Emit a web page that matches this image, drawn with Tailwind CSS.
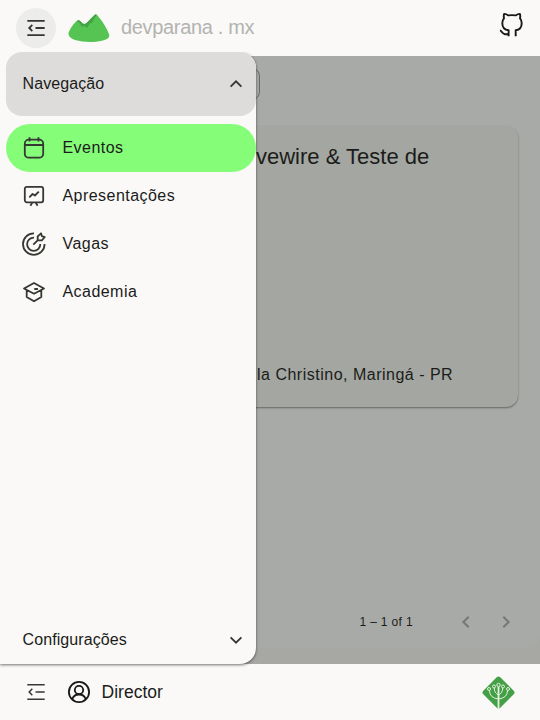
<!DOCTYPE html>
<html lang="pt-BR">
<head>
<meta charset="utf-8">
<title>devparana . mx</title>
<script src="https://cdn.jsdelivr.net/npm/@tailwindcss/browser@4"></script>
</head>
<body class="relative flex h-[720px] w-[540px] flex-col overflow-hidden bg-[#faf9f7] font-['Liberation_Sans',sans-serif] text-[#1b1c1a]">
<header class="flex h-14 shrink-0 items-center pl-4 pr-[15px]">
  <button class="flex size-10 items-center justify-center rounded-full bg-[#ecedeb]">
    <svg class="size-6" viewBox="0 0 24 24" fill="none" stroke="#353733" stroke-width="1.8"><path d="M3.3 4.8H20.7M11.5 12h9.2M3.3 19.2H20.7M8.3 8.8 5.2 12l3.1 3.2"/></svg>
  </button>
  <svg class="ml-3 h-8 w-[42px]" viewBox="0 0 42 32"><path d="M.8 20Q4 13 8.7 9Q11 7 13 9.8Q15 13 18 11.5L26.5 3Q28 1.5 29.5 3.5Q37 12 41 22Q43 28 30 29.5Q18 31.2 7 28Q-1 25 .8 20Z" fill="#55c453"/><path d="M8.7 9Q11 7 13 9.8Q15 13 18 11.5L26.5 3Q27.5 2 28.5 2.8L24 11L22 11.2L19 16L16.5 13.8L14 15L11.5 11Z" fill="#43a345"/></svg>
  <span class="mb-0.5 ml-[11px] whitespace-nowrap text-[20px] tracking-[-0.33px] text-[#b2b3b0]">devparana . mx</span>
  <svg class="ml-auto mb-[9px] h-7 w-[26px]" viewBox="-1 0 26 28" fill="none" stroke="#171916" stroke-width="1.9" stroke-linejoin="round"><path d="M8.6 26.3v-6C4.5 19.8 2.3 17 2.3 13.2c0-2.1.6-3.7 1.7-4.9-.4-1.5-.3-3 .1-4.4 1.6 0 3 .6 4.2 1.5 2.4-.4 5-.4 7.4 0 1.2-.9 2.6-1.5 4.2-1.5.4 1.4.5 2.9.1 4.4 1.1 1.2 1.7 2.8 1.7 4.9 0 3.8-2.2 6.6-6 7.1v6M0 20.3c1.6.4 2 3.6 5 4h3.6"/></svg>
</header>

<main class="flex h-[608px] shrink-0 flex-col bg-[#a7a7a4]">
  <section class="flex h-[592px] flex-col rounded-b-xl bg-[#a7aaa6] pl-3 pr-[22px] pt-3">
    <div class="h-8 w-[248px] rounded-lg border border-[#666964]"></div>
    <article class="mt-[26px] flex h-[281px] flex-col rounded-xl bg-[#a4a7a1] pl-[243px] shadow-[0_1px_2px_rgba(0,0,0,0.4)]">
      <h2 class="mt-[17px] whitespace-nowrap pl-px text-[22px] leading-7">vewire &amp; Teste de</h2>
      <p class="mt-[192px] whitespace-nowrap pl-[2px] text-base tracking-[0.5px]">la Christino, Maringá - PR</p>
    </article>
    <nav class="-mr-0.5 mb-[6px] mt-auto flex h-10 items-center justify-end">
      <span class="mr-[33px] text-xs tracking-[0.35px]">1 – 1 of 1</span>
      <span class="flex w-10 justify-center"><svg class="size-6" viewBox="0 0 24 24" fill="#747773"><path d="M15.4 7.4 14 6l-6 6 6 6 1.4-1.4-4.6-4.6z"/></svg></span>
      <span class="-mr-[6px] flex w-10 justify-center"><svg class="size-6" viewBox="0 0 24 24" fill="#747773"><path d="m10 6-1.4 1.4 4.6 4.6-4.6 4.6L10 18l6-6z"/></svg></span>
    </nav>
  </section>
</main>

<footer class="flex h-14 shrink-0 items-center pl-6 pr-6">
  <svg class="size-6" viewBox="0 0 24 24" fill="none" stroke="#353733" stroke-width="1.5"><path d="M3.3 4.8H20.7M11.5 12h9.2M3.3 19.2H20.7M8.3 8.8 5.2 12l3.1 3.2"/></svg>
  <svg class="ml-[19px] size-6" viewBox="0 0 24 24" fill="none" stroke="#171916" stroke-width="1.8"><circle cx="12" cy="12" r="10.1"/><circle cx="12" cy="10" r="4.2"/><path d="M5.3 19c1-3 3.7-4.5 6.7-4.5s5.7 1.5 6.7 4.5"/></svg>
  <span class="ml-[10.6px] text-[17.5px] leading-6">Director</span>
  <svg class="ml-auto size-[35px]" viewBox="0 0 35 35"><rect x="5.5" y="5.5" width="24" height="24" rx="2.5" transform="rotate(45 17.5 17.5)" fill="#43a047"/><g fill="none" stroke="#e5f1dc" stroke-width="1"><path d="M17.5 34V12" stroke-width="1.8"/><path d="M17.5 24q-9-1-9-8.5M17.5 24q9-1 9-8.5M17.5 20q-4.2-2-4.2-7M17.5 20q4.2-2 4.2-7"/><circle cx="8" cy="14" r="1.5"/><circle cx="13" cy="11.5" r="1.5"/><circle cx="17.5" cy="10" r="1.7"/><circle cx="22" cy="11.5" r="1.5"/><circle cx="27" cy="14" r="1.5"/></g></svg>
</footer>

<aside class="absolute left-0 top-[52px] flex h-[612px] w-64 flex-col rounded-r-2xl bg-[#faf9f7] shadow-[0_1px_3px_rgba(0,0,0,0.55)] [clip-path:inset(0_-5px_-6px_0)]">
  <div class="ml-1.5 flex h-16 items-center justify-between rounded-2xl bg-[#dddcda] pl-[16.5px] pr-2">
    <span class="text-base tracking-[0.1px]">Navegação</span>
    <svg class="size-6" viewBox="0 0 24 24" fill="none" stroke="#353733" stroke-width="1.8"><path d="m6.6 14.7 5.4-5.4 5.4 5.4"/></svg>
  </div>
  <nav class="ml-1.5 mt-2 flex flex-col text-base tracking-[0.45px]">
    <a class="flex h-12 items-center gap-[16.5px] rounded-full bg-[#86fd79] pl-4">
      <svg class="size-6" viewBox="0 0 24 24" fill="none" stroke="#353733" stroke-width="1.8"><rect x="2.8" y="3.7" width="18.4" height="18" rx="4"/><path d="M2.8 9h18.4M7.5 1.3v4.2M16.5 1.3v4.2"/></svg>
      <span>Eventos</span>
    </a>
    <a class="flex h-12 items-center gap-[16.5px] pl-4">
      <svg class="size-6" viewBox="0 0 24 24" fill="none" stroke="#353733" stroke-width="1.8" stroke-linejoin="round"><rect x="2.8" y="2.9" width="18.4" height="15.4" rx="2"/><path d="m10.2 18.8-1.8 3M13.8 18.8l1.8 3M7.3 13.3l3.3-3.3 2.3 1.5 3.9-3.9"/></svg>
      <span>Apresentações</span>
    </a>
    <a class="flex h-12 items-center gap-[16.5px] pl-4">
      <svg class="size-6" viewBox="0 0 24 24" fill="none" stroke="#353733" stroke-width="1.8" stroke-linejoin="round"><path d="M12 1.3A10.8 10.8 0 1 0 22.6 12M12 5.6A6.6 6.6 0 1 0 18.3 12M11.3 12.6 16.4 7.6M15.7 8.3V4.3l3.3-3 .9 2.9 2.9.8-3 3.3z"/></svg>
      <span>Vagas</span>
    </a>
    <a class="flex h-12 items-center gap-[16.5px] pl-4">
      <svg class="size-6" viewBox="0 0 24 24" fill="none" stroke="#353733" stroke-width="1.8" stroke-linejoin="round"><path d="M2 8.5 12 3l10 5.5-10 5.2zM4.7 10.3v6.6L12 21.3l7.3-4.4v-6.6M12.3 9h3.6"/></svg>
      <span>Academia</span>
    </a>
  </nav>
  <div class="ml-1.5 mt-auto flex h-12 items-center justify-between pl-[16.5px] pr-2">
    <span class="text-base tracking-[0.1px]">Configurações</span>
    <svg class="size-6" viewBox="0 0 24 24" fill="none" stroke="#353733" stroke-width="1.8"><path d="m6.6 9.3 5.4 5.4 5.4-5.4"/></svg>
  </div>
</aside>
</body>
</html>
